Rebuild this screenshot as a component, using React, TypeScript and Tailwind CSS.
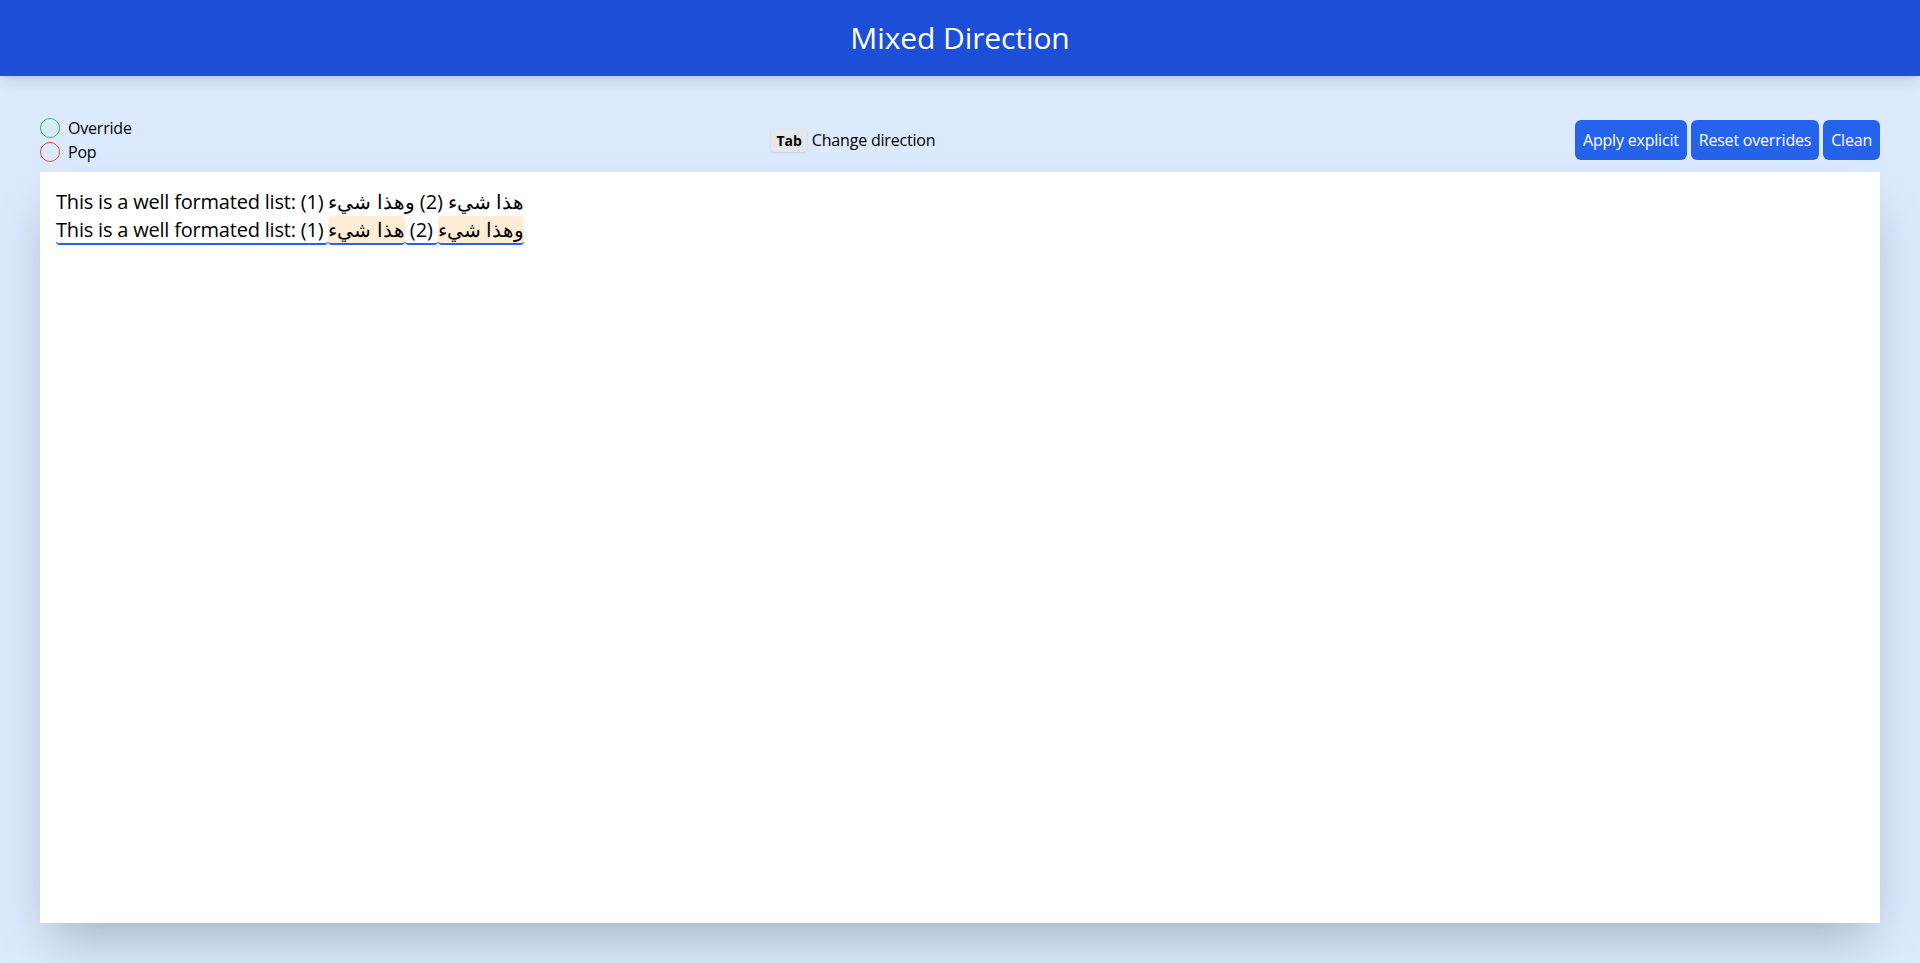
import React from "react";

export default function App() {
  return (
    <div className="flex h-screen flex-col bg-[#dbeafe] font-['Open_Sans',sans-serif] tracking-[-0.2px] text-black">
      <header className="relative z-10 bg-[#1d4ed8] py-5 text-center text-3xl tracking-[-0.1px] text-white shadow-lg">
        Mixed Direction
      </header>
      <main className="flex flex-1 flex-col px-10 pt-10 pb-10">
        <div className="mb-2 flex items-center justify-between">
          <div className="flex flex-col">
            <div className="flex items-center gap-2">
              <span className="h-5 w-5 rounded-full border-[1.5px] border-[#22c55e]" />
              <span>Override</span>
            </div>
            <div className="flex items-center gap-2">
              <span className="h-5 w-5 rounded-full border-[1.5px] border-[#ef4444]" />
              <span>Pop</span>
            </div>
          </div>
          <div className="flex items-center gap-[5px]">
            <kbd className="rounded bg-[#e5e7eb] px-[5px] py-[2px] font-['Open_Sans',sans-serif] text-sm leading-[19px] font-bold tracking-normal shadow-sm">
              Tab
            </kbd>
            <span>Change direction</span>
          </div>
          <div className="flex gap-1">
            <button className="rounded-md bg-[#2563eb] px-2 py-2 text-white">Apply explicit</button>
            <button className="rounded-md bg-[#2563eb] px-2 py-2 text-white">Reset overrides</button>
            <button className="rounded-md bg-[#2563eb] px-2 py-2 text-white">Clean</button>
          </div>
        </div>
        <div className="flex-1 bg-white p-4 text-xl shadow-2xl">
          <div>This is a well formated list: (1) هذا شيء (2) وهذا شيء</div>
          <div>
            <span className="rounded border-b-2 border-[#2563eb] whitespace-pre">This is a well formated list: (1) </span>
            <span dir="rtl" className="rounded border-b-2 border-[#2563eb] bg-[#ffedd5]">هذا شيء</span>
            <span className="rounded border-b-2 border-[#2563eb] whitespace-pre"> (2) </span>
            <span dir="rtl" className="rounded border-b-2 border-[#2563eb] bg-[#ffedd5]">وهذا شيء</span>
          </div>
        </div>
      </main>
    </div>
  );
}
